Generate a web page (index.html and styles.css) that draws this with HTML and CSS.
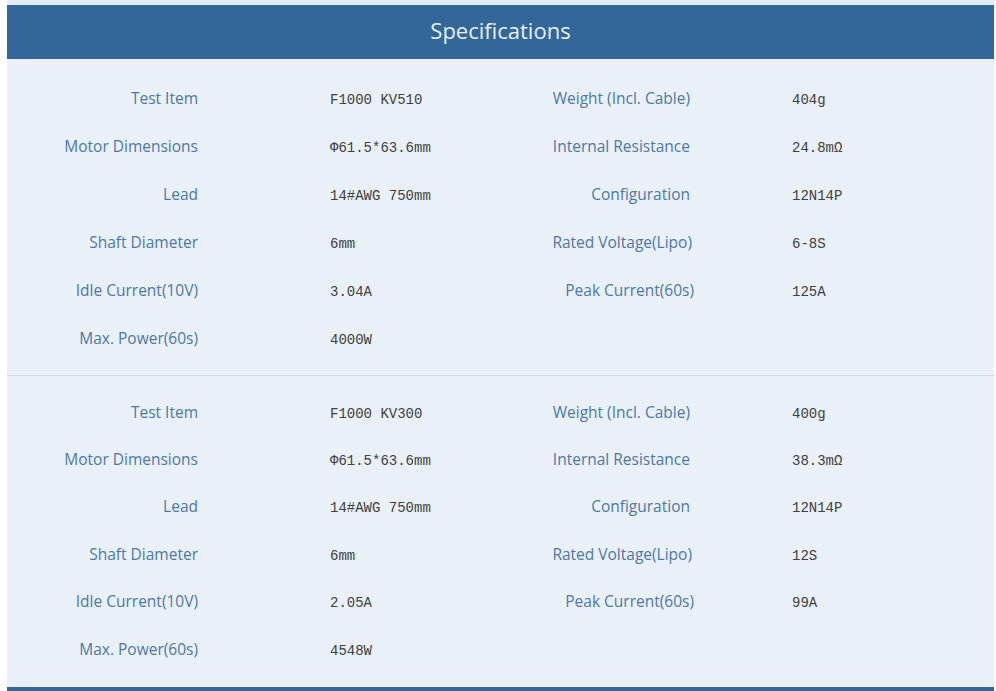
FILE: index.html
```html
<!DOCTYPE html>
<html>
<head>
<meta charset="utf-8">
<link rel="stylesheet" href="styles.css">
</head>
<body>
<div class="panel">
  <div class="header">Specifications</div>
  <div class="section">
    <div class="lab">Test Item</div><div class="val v1">F1000 KV510</div><div class="lab">Weight (Incl. Cable)</div><div class="val v2">404g</div>
    <div class="lab">Motor Dimensions</div><div class="val v1">Φ61.5*63.6mm</div><div class="lab">Internal Resistance</div><div class="val v2">24.8mΩ</div>
    <div class="lab">Lead</div><div class="val v1">14#AWG 750mm</div><div class="lab">Configuration</div><div class="val v2">12N14P</div>
    <div class="lab">Shaft Diameter</div><div class="val v1">6mm</div><div class="lab shift2">Rated Voltage(Lipo)</div><div class="val v2">6-8S</div>
    <div class="lab">Idle Current(10V)</div><div class="val v1">3.04A</div><div class="lab shift4">Peak Current(60s)</div><div class="val v2">125A</div>
    <div class="lab">Max. Power(60s)</div><div class="val v1">4000W</div><div class="lab"></div><div class="val v2"></div>
  </div>
  <div class="section second">
    <div class="lab">Test Item</div><div class="val v1">F1000 KV300</div><div class="lab">Weight (Incl. Cable)</div><div class="val v2">400g</div>
    <div class="lab">Motor Dimensions</div><div class="val v1">Φ61.5*63.6mm</div><div class="lab">Internal Resistance</div><div class="val v2">38.3mΩ</div>
    <div class="lab">Lead</div><div class="val v1">14#AWG 750mm</div><div class="lab">Configuration</div><div class="val v2">12N14P</div>
    <div class="lab">Shaft Diameter</div><div class="val v1">6mm</div><div class="lab shift2">Rated Voltage(Lipo)</div><div class="val v2">12S</div>
    <div class="lab">Idle Current(10V)</div><div class="val v1">2.05A</div><div class="lab shift4">Peak Current(60s)</div><div class="val v2">99A</div>
    <div class="lab">Max. Power(60s)</div><div class="val v1">4548W</div><div class="lab"></div><div class="val v2"></div>
  </div>
  <div class="footer"></div>
</div>
</body>
</html>
```
FILE: styles.css
```css
html, body {
  margin: 0;
  padding: 0;
  background: #ffffff;
}
body {
  overflow: hidden;
}
.panel {
  margin-left: 7px;
  width: 987px;
  background: #eaf0f7;
  border-top: 5px solid #e4ecf6;
}
.header {
  height: 54px;
  box-sizing: border-box;
  padding-bottom: 4px;
  background: #336699;
  color: #e8f0fa;
  font-family: "Open Sans", sans-serif;
  font-size: 22px;
  display: flex;
  align-items: center;
  justify-content: center;
}
.section {
  display: grid;
  grid-template-columns: 191px 320px 172px 1fr;
  grid-auto-rows: 48px;
  align-items: center;
  padding: 15px 0 13px;
  border-bottom: 1px solid #d3dbe5;
}
.section.second {
  grid-auto-rows: 47.4px;
  padding: 12px 0 15px;
  border-bottom: none;
}
.lab {
  text-align: right;
  font-family: "Open Sans", sans-serif;
  font-size: 15.5px;
  color: #4d78a8;
  white-space: nowrap;
}
.shift2 { margin-right: -2px; }
.shift4 { margin-right: -4px; }
.val {
  font-family: "Liberation Mono", monospace;
  font-size: 14px;
  color: #404040;
  white-space: nowrap;
  padding-top: 4px;
}
.v1 { padding-left: 132px; }
.v2 { padding-left: 102px; }
.footer {
  height: 4px;
  background: #336699;
}
```
